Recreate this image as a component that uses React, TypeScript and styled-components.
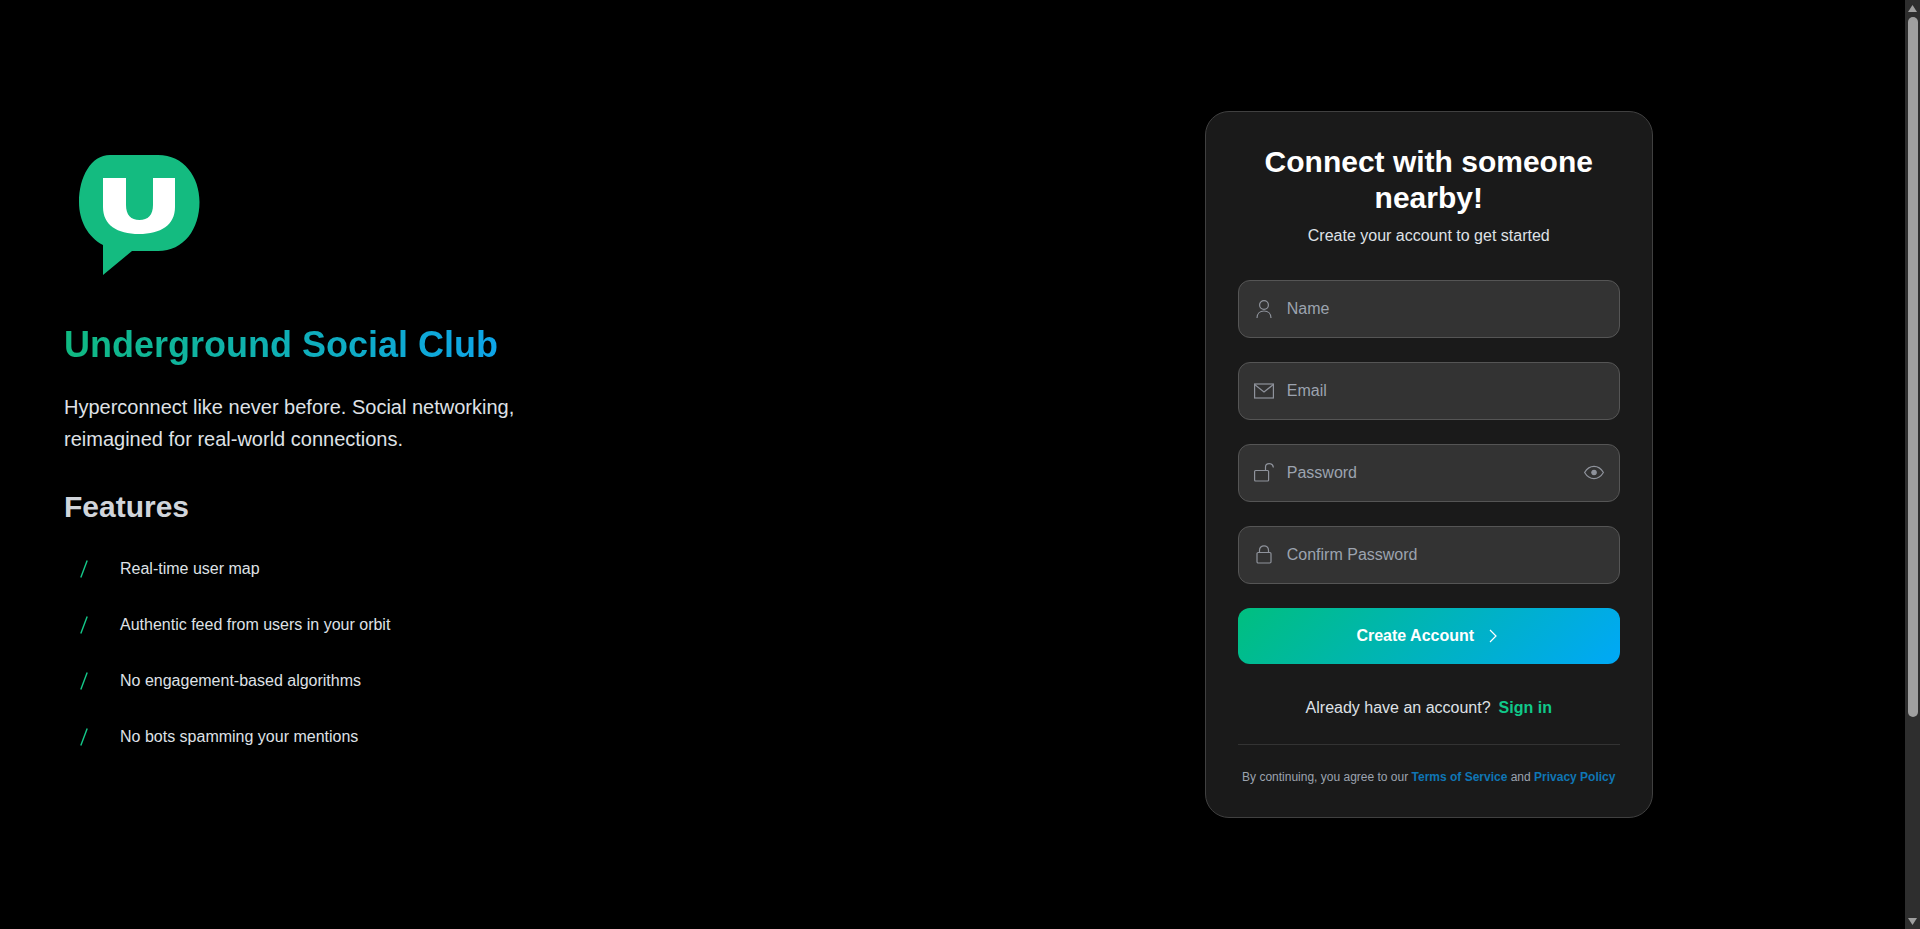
import React from "react";
import styled, { createGlobalStyle } from "styled-components";

const GlobalStyle = createGlobalStyle`
  html {
    color-scheme: dark;
  }
  * {
    box-sizing: border-box;
  }
  body {
    margin: 0;
    background: #000;
    font-family: "Liberation Sans", Arial, sans-serif;
  }
  input::placeholder {
    color: #9ca3af;
    opacity: 1;
  }
`;

const Page = styled.main`
  display: grid;
  grid-template-columns: 1fr 1fr;
  min-height: 1188px;
  padding-right: 15px;
  background: #000;
`;

const ScrollRail = styled.div`
  position: fixed;
  top: 0;
  right: 0;
  bottom: 0;
  width: 15px;
  display: flex;
  flex-direction: column;
  align-items: center;
  padding: 5px 0 4px;
  background: #2e2e2e;
`;

const ScrollArrow = styled.svg`
  display: block;
  width: 9px;
  height: 7px;
  flex: none;
  fill: #9f9f9f;
`;

const ScrollThumb = styled.div`
  width: 10px;
  height: 700px;
  margin: 5px 0 auto;
  border-radius: 5px;
  background: #9f9f9f;
`;

const Intro = styled.section`
  padding: 155px 64px 0;
`;

const LogoMark = styled.svg`
  display: block;
  width: 121px;
  height: 120px;
  margin: 0 0 50px 15px;
`;

const Brand = styled.h1`
  margin: 0 0 26px;
  width: fit-content;
  font-size: 36px;
  line-height: 40px;
  font-weight: 700;
  background: linear-gradient(90deg, #10b981, #0ea5e9);
  -webkit-background-clip: text;
  background-clip: text;
  color: transparent;
`;

const Tagline = styled.p`
  margin: 0 0 34px;
  width: 480px;
  font-size: 20px;
  line-height: 32px;
  color: #dfe1e6;
`;

const FeaturesTitle = styled.h2`
  margin: 0 0 32px;
  font-size: 30px;
  line-height: 36px;
  font-weight: 700;
  color: #d1d5db;
`;

const FeatureList = styled.ul`
  list-style: none;
  margin: 0;
  padding: 0;
  display: flex;
  flex-direction: column;
  gap: 32px;
`;

const FeatureItem = styled.li`
  display: flex;
  align-items: center;
  gap: 32px;
  padding-left: 16px;
  height: 24px;
  font-size: 16px;
  color: #dfe1e6;
`;

const Tick = styled.svg`
  width: 8px;
  height: 18px;
  flex: none;
`;

const CardColumn = styled.section`
  padding-top: 111px;
  display: flex;
  justify-content: center;
`;

const Card = styled.div`
  width: 448px;
  height: 707px;
  padding: 32px;
  background: #1a1a1a;
  border: 1px solid #404040;
  border-radius: 24px;
`;

const CardTitle = styled.h2`
  margin: 0 0 8px;
  font-size: 30px;
  line-height: 36px;
  font-weight: 700;
  text-align: center;
  color: #fff;
`;

const CardSubtitle = styled.p`
  margin: 0 0 32px;
  font-size: 16px;
  line-height: 24px;
  text-align: center;
  color: #dfe1e6;
`;

const Form = styled.form`
  display: flex;
  flex-direction: column;
  gap: 24px;
`;

const Field = styled.label`
  display: flex;
  align-items: center;
  height: 58px;
  padding: 0 15px;
  gap: 13px;
  background: #333;
  border: 1px solid #555;
  border-radius: 12px;
`;

const FieldIcon = styled.svg`
  width: 20px;
  height: 20px;
  flex: none;
  fill: none;
  stroke: #8f939c;
  stroke-width: 1.2;
`;

const FieldInput = styled.input`
  flex: 1;
  min-width: 0;
  height: 100%;
  padding: 0;
  border: 0;
  outline: 0;
  background: transparent;
  font: 16px "Liberation Sans", Arial, sans-serif;
  color: #fff;
`;

const SubmitButton = styled.button`
  display: flex;
  align-items: center;
  justify-content: center;
  gap: 11px;
  height: 56px;
  padding-bottom: 1px;
  border: 0;
  border-radius: 12px;
  background: linear-gradient(135deg, #00bf7f, #00a8f7);
  font: 700 16px "Liberation Sans", Arial, sans-serif;
  color: #fff;
`;

const Chevron = styled.svg`
  width: 16px;
  height: 16px;
  fill: none;
  stroke: #fff;
  stroke-width: 1.2;
`;

const SignInRow = styled.p`
  margin: 32px 0 0;
  font-size: 16px;
  line-height: 24px;
  text-align: center;
  color: #dfe1e6;
`;

const SignInLink = styled.a`
  margin-left: 8px;
  font-weight: 700;
  color: #10c98a;
`;

const Divider = styled.hr`
  margin: 24px 0 0;
  border: 0;
  border-top: 1px solid #333;
`;

const Terms = styled.p`
  margin: 24px 0 0;
  font-size: 12px;
  line-height: 16px;
  text-align: center;
  color: #9ca3af;
`;

const TermsLink = styled.a`
  font-weight: 700;
  color: #0f76b5;
`;

const features = [
  "Real-time user map",
  "Authentic feed from users in your orbit",
  "No engagement-based algorithms",
  "No bots spamming your mentions",
];

export default function App() {
  return (
    <>
      <GlobalStyle />
      <Page>
        <Intro>
          <LogoMark viewBox="0 0 121 120">
            <path
              fill="#14bb80"
              d="M31 0H79C105 0 120.5 22 120.5 47C120.5 74 105 96 79 96H53L24 120V90C9 82 0 66 0 47C0 22 12 0 31 0Z"
            />
            <path
              fill="#fff"
              d="M24 23H47V50C47 60 52 65 60.5 65S74 60 74 50V23H96V52C96 70 82 79 60 79S24 70 24 52Z"
            />
          </LogoMark>
          <Brand>Underground Social Club</Brand>
          <Tagline>
            Hyperconnect like never before. Social networking, reimagined for real-world connections.
          </Tagline>
          <FeaturesTitle>Features</FeaturesTitle>
          <FeatureList>
            {features.map((feature) => (
              <FeatureItem key={feature}>
                <Tick viewBox="0 0 8 18">
                  <path d="M7.2 0.5L0.8 17.5" stroke="#14c98a" strokeWidth="1.4" fill="none" />
                </Tick>
                {feature}
              </FeatureItem>
            ))}
          </FeatureList>
        </Intro>
        <CardColumn>
          <Card>
            <CardTitle>Connect with someone nearby!</CardTitle>
            <CardSubtitle>Create your account to get started</CardSubtitle>
            <Form>
              <Field>
                <FieldIcon viewBox="0 0 20 20">
                  <circle cx="10" cy="6" r="4.4" />
                  <path d="M3 19C3 14.5 6 12 10 12S17 14.5 17 19" />
                </FieldIcon>
                <FieldInput placeholder="Name" />
              </Field>
              <Field>
                <FieldIcon viewBox="0 0 20 20">
                  <rect x="0.6" y="3" width="18.8" height="14" />
                  <path d="M0.6 3.5L10 11L19.4 3.5" />
                </FieldIcon>
                <FieldInput placeholder="Email" />
              </Field>
              <Field>
                <FieldIcon viewBox="0 0 20 20">
                  <rect x="0.6" y="7.5" width="14" height="10.5" rx="1" />
                  <path d="M11.5 7.5V4C11.5 2 13 0.6 15.2 0.6S19 2 19.4 4.5" />
                </FieldIcon>
                <FieldInput placeholder="Password" />
                <FieldIcon viewBox="0 0 20 20">
                  <path d="M0.6 9.5C3 5.5 6.2 3.4 10 3.4S17 5.5 19.4 9.5C17 13.5 13.8 15.6 10 15.6S3 13.5 0.6 9.5Z" />
                  <circle cx="10" cy="9.5" r="2.2" fill="#8f939c" />
                </FieldIcon>
              </Field>
              <Field>
                <FieldIcon viewBox="0 0 20 20">
                  <rect x="3" y="7.5" width="14" height="10.5" rx="1.2" />
                  <path d="M5.5 7.5V5.2C5.5 2.6 7.5 0.8 10 0.8S14.5 2.6 14.5 5.2V7.5" />
                </FieldIcon>
                <FieldInput placeholder="Confirm Password" />
              </Field>
              <SubmitButton type="button">
                Create Account
                <Chevron viewBox="0 0 16 16">
                  <path d="M5 2L11 8L5 14" />
                </Chevron>
              </SubmitButton>
            </Form>
            <SignInRow>
              Already have an account?
              <SignInLink>Sign in</SignInLink>
            </SignInRow>
            <Divider />
            <Terms>
              By continuing, you agree to our <TermsLink>Terms of Service</TermsLink> and{" "}
              <TermsLink>Privacy Policy</TermsLink>
            </Terms>
          </Card>
        </CardColumn>
      </Page>
      <ScrollRail>
        <ScrollArrow viewBox="0 0 9 7">
          <path d="M4.5 0L9 7H0Z" />
        </ScrollArrow>
        <ScrollThumb />
        <ScrollArrow viewBox="0 0 9 7">
          <path d="M0 0H9L4.5 7Z" />
        </ScrollArrow>
      </ScrollRail>
    </>
  );
}
